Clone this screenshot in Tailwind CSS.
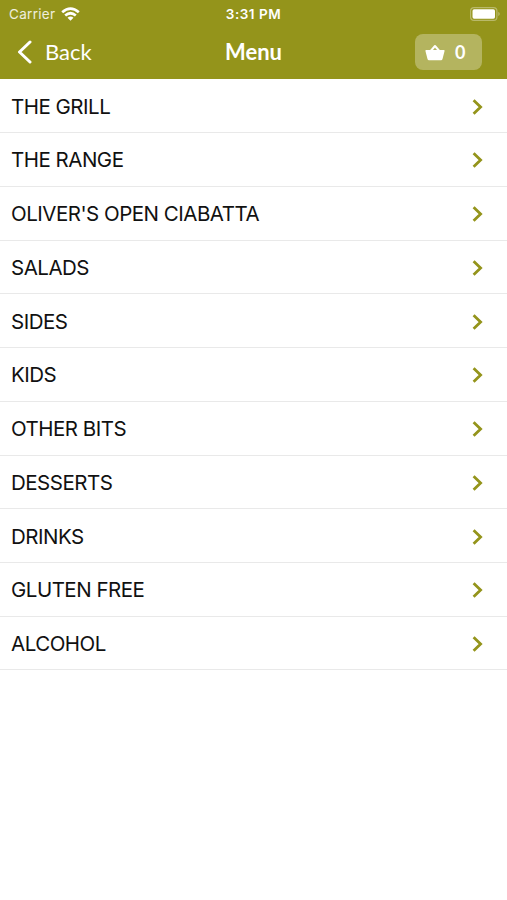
<!DOCTYPE html>
<html lang="en">
<head>
<meta charset="utf-8">
<title>Menu</title>
<script src="https://cdn.jsdelivr.net/npm/@tailwindcss/browser@4"></script>
</head>
<body class="bg-white w-[507px] h-[900px] overflow-hidden font-['Inter',sans-serif] text-[#111]">
<header class="h-[79.4px] bg-[#94941b] text-white">
  <div class="h-[27px] grid grid-cols-3 items-center text-[13.5px] leading-none">
    <div class="flex items-center gap-[6px] pl-[9px] text-white/85">
      <span class="tracking-[0.3px] pt-[2px]">Carrier</span>
      <svg class="w-[19px] h-[14px]" viewBox="0 0 19 14" fill="none" stroke="#fff" stroke-width="2.7"><path d="M1.2 5.2Q9.5-2 17.8 5.2M4.2 8.5Q9.5 4 14.8 8.5"/><path d="M6.5 10.7Q9.5 8.5 12.5 10.7L9.5 13.7Z" fill="#fff" stroke="none"/></svg>
    </div>
    <div class="text-center font-semibold tracking-[0.5px] pt-[2px]">3:31 PM</div>
    <div class="flex justify-end pr-[6px]">
      <svg class="w-[31px] h-[14px]" viewBox="0 0 31 14"><rect x=".6" y=".6" width="26.3" height="12.8" rx="3.5" fill="none" stroke="#fff" stroke-opacity=".35" stroke-width="1.2"/><rect x="2.5" y="2.3" width="22.5" height="9.4" rx="1.6" fill="#fff"/><path d="M28.4 4.8Q31 7 28.4 9.2Z" fill="#fff" fill-opacity=".4"/></svg>
    </div>
  </div>
  <nav class="h-[50px] grid grid-cols-3 items-center font-['Lato',sans-serif]">
    <div class="flex items-center pl-[17px] gap-[13px]">
      <svg class="w-[15px] h-[24px]" viewBox="0 0 15 24" fill="none" stroke="#fff" stroke-width="3" stroke-linecap="round" stroke-linejoin="round"><path d="M13 2L2.5 12L13 22"/></svg>
      <span class="text-[22px] leading-[26px]">Back</span>
    </div>
    <h1 class="text-center text-[22px] leading-[26px] font-bold">Menu</h1>
    <div class="flex justify-end pr-[25px]">
      <div class="w-[67px] h-[36px] rounded-[8px] bg-white/30 flex items-center pl-[10px] gap-[10px]">
        <svg class="w-[20px] h-[17px]" viewBox="0 0 20 17"><path d="M5.7 7L10 2L14.3 7" fill="none" stroke="#fff" stroke-width="2" stroke-linejoin="round"/><path d="M1 6H19Q20 6.2 19.5 7.3L17.5 15Q17.2 16.2 16 16.2H4Q2.8 16.2 2.5 15L.5 7.3Q0 6.2 1 6Z" fill="#fff"/></svg>
        <span class="text-[18px] leading-none font-bold">0</span>
      </div>
    </div>
  </nav>
</header>
<ul id="list" class="text-[20.5px] tracking-[-0.5px]"></ul>
<template id="row">
  <li class="h-[53.74px] border-b border-[#e9e9e9] flex items-center justify-between pl-[11px] pr-[24px] pt-[2px]">
    <span class="whitespace-nowrap leading-[24px]"></span>
    <svg class="w-[11px] h-[16px]" viewBox="0 0 11 16" fill="none" stroke="#94941b" stroke-width="2.8"><path d="M1.6 1.3L8.6 8L1.6 14.7"/></svg>
  </li>
</template>
<script>
const items = ["THE GRILL", "THE RANGE", "OLIVER'S OPEN CIABATTA", "SALADS", "SIDES", "KIDS", "OTHER BITS", "DESSERTS", "DRINKS", "GLUTEN FREE", "ALCOHOL"];
const list = document.getElementById('list'), row = document.getElementById('row');
for (const name of items) {
  const li = row.content.cloneNode(true);
  li.querySelector('span').textContent = name;
  list.append(li);
}
</script>
</body>
</html>
